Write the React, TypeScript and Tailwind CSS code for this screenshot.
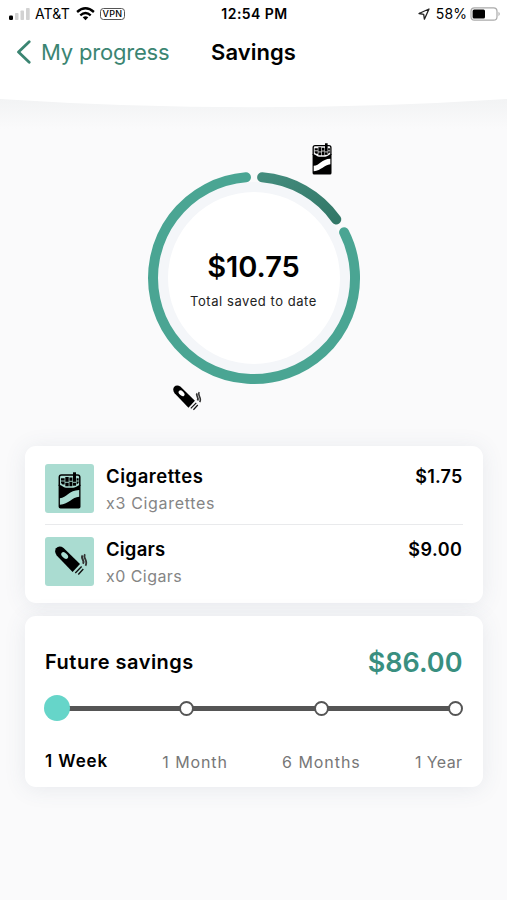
import { useState } from "react";
import clsx from "clsx";

type IconProps = { className?: string };

const products = [
  { name: "Cigarettes", detail: "x3 Cigarettes", amount: "$1.75", Icon: PackIcon, iconClass: "w-[23px] h-[37px] mt-1", nameClass: "tracking-[0.55px]", detailClass: "tracking-[0.68px]", amountClass: "tracking-[0.2px]" },
  { name: "Cigars", detail: "x0 Cigars", amount: "$9.00", Icon: CigarIcon, iconClass: "w-[33px] h-[31px] ml-1", nameClass: "tracking-[0.2px]", detailClass: "tracking-[0.45px]", amountClass: "tracking-[0.5px]" },
];

const periods = [
  { label: "1 Week", active: "tracking-[0.9px]", idle: "tracking-[0.3px]" },
  { label: "1 Month", active: "tracking-[0.3px]", idle: "tracking-[0.9px]" },
  { label: "6 Months", active: "tracking-[0.3px]", idle: "tracking-[0.95px]" },
  { label: "1 Year", active: "tracking-[0.3px]", idle: "tracking-[0.4px]" },
];

export default function App() {
  return (
    <div className="h-[900px] w-[507px] overflow-hidden bg-[#fafafb] font-['Inter',sans-serif] text-black">
      <Header />
      <SavingsRing />
      <main className="flex flex-col gap-[13px] pl-[25px] pr-[24.5px]">
        <ProductCard />
        <FutureSavings />
      </main>
    </div>
  );
}

function Header() {
  return (
    <header className="h-[120px]">
      <div className="h-[99px] bg-white">
        <div className="grid h-[27px] grid-cols-[1fr_auto_1fr] items-center pl-2 pr-[6px]">
          <div className="flex items-center">
            <SignalIcon className="h-[14px] w-[23px]" />
            <span className="ml-1 text-[14px] tracking-[0.15px]">AT&amp;T</span>
            <WifiIcon className="ml-[6px] h-[14px] w-[19px]" />
            <span className="ml-[5px] flex h-[12px] w-[25px] items-center justify-center rounded-[3.5px] border border-[#555] text-[9px] font-medium tracking-[0.3px]">VPN</span>
          </div>
          <span className="text-[14px] font-semibold tracking-[0.45px]">12:54 PM</span>
          <div className="flex items-center justify-end">
            <LocationIcon className="h-3 w-3" />
            <span className="ml-[6px] text-[14px] tracking-[0.1px]">58%</span>
            <BatteryIcon className="ml-[3px] h-[14px] w-[31px]" />
          </div>
        </div>
        <nav className="grid h-[50px] grid-cols-[1fr_auto_1fr] items-center px-4">
          <a className="flex items-center text-[#3b8572]">
            <svg viewBox="0 0 16 24" className="h-6 w-4" fill="none" stroke="currentColor" strokeWidth="2.8" strokeLinecap="round" strokeLinejoin="round">
              <path d="M13.2 1.8 2.5 12l10.7 10.2" />
            </svg>
            <span className="ml-[9px] whitespace-nowrap text-[22px] tracking-[-0.2px]">My progress</span>
          </a>
          <h1 className="text-[22px] font-semibold tracking-[0.05px]">Savings</h1>
        </nav>
      </div>
      <svg viewBox="0 0 507 30" className="block h-[30px] w-full">
        <defs>
          <linearGradient id="headerShade" x1="0" y1="0" x2="0" y2="1">
            <stop offset="0" stopColor="#f2f3f4" />
            <stop offset="1" stopColor="#fafafb" />
          </linearGradient>
        </defs>
        <rect width="507" height="30" fill="url(#headerShade)" />
        <path d="M0 0Q253 16.5 507 0Z" fill="#fff" />
      </svg>
    </header>
  );
}

function SavingsRing() {
  return (
    <section className="relative h-[326px] text-white">
      <svg viewBox="0 0 507 326" className="absolute inset-0 h-full w-full">
        <defs>
          <linearGradient id="packArc" x1="0" y1="0" x2="1" y2="1">
            <stop offset="0" stopColor="#438c7d" />
            <stop offset="1" stopColor="#327767" />
          </linearGradient>
        </defs>
        <g transform="translate(254 158)">
          <circle r="96" fill="#f4f6f9" />
          <circle r="86" fill="#fff" />
          <g fill="none" strokeWidth="10" strokeLinecap="round">
            <path d="M8.1-100.7A101 101 0 0 1 82.3-58.5" stroke="url(#packArc)" />
            <path d="M90.1-45.7A101 101 0 1 1-8-100.7" stroke="#4aa593" />
          </g>
        </g>
      </svg>
      <PackIcon className="absolute left-[312px] top-[23px] h-8 w-5" />
      <CigarIcon className="absolute left-[173px] top-[265px] h-[27px] w-[29px]" />
      <div className="relative flex flex-col items-center pt-[128px] text-black">
        <p className="text-[29px] font-semibold leading-[38px]">$10.75</p>
        <p className="mt-[6px] text-[13px] leading-[18px] tracking-[0.55px] text-[#222]">Total saved to date</p>
      </div>
    </section>
  );
}

function ProductCard() {
  return (
    <section className="h-[157px] rounded-[11px] bg-white px-5 pt-[18px] shadow-[0_2px_22px_rgba(70,85,115,0.10)]">
      {products.map(({ name, detail, amount, Icon, iconClass, nameClass, detailClass, amountClass }, i) => (
        <div key={name} className={clsx("flex", i > 0 && "mt-[11px] border-t border-[#e9eaec] pt-3")}>
          <div className="flex h-[49px] w-[49px] items-center justify-center rounded-[3px] bg-[#aadcd1] text-[#aadcd1]">
            <Icon className={iconClass} />
          </div>
          <div className="ml-3 h-[49px] flex-1">
            <p className={clsx("text-[18.5px] font-semibold leading-6", nameClass)}>{name}</p>
            <p className={clsx("mt-[3px] text-[16px] leading-6 text-[#858585]", detailClass)}>{detail}</p>
          </div>
          <p className={clsx("pt-px text-[18px] font-semibold leading-6", amountClass)}>{amount}</p>
        </div>
      ))}
    </section>
  );
}

function FutureSavings() {
  const [selected, setSelected] = useState(0);

  return (
    <section className="h-[171px] rounded-[11px] bg-white px-5 pt-[26px] shadow-[0_2px_22px_rgba(70,85,115,0.10)]">
      <div className="flex h-10 items-center justify-between">
        <h2 className="text-[20px] font-semibold tracking-[0.5px]">Future savings</h2>
        <p className="pt-[2px] text-[27px] font-semibold text-[#398f80]">$86.00</p>
      </div>
      <div className="relative -mx-px mt-[13px] flex h-[26px] items-center justify-between">
        <div className="absolute left-3 right-2 top-[11px] h-[5px] bg-[#555]" />
        {periods.map(({ label }, i) => (
          <button
            key={label}
            aria-label={label}
            onClick={() => setSelected(i)}
            className={clsx(
              "relative rounded-full",
              selected === i ? "-mr-[11px] h-[26px] w-[26px] bg-[#66d5c9]" : "h-[15px] w-[15px] border-2 border-[#555] bg-white"
            )}
          />
        ))}
      </div>
      <div className="mt-[29px] flex h-6 items-center justify-between">
        {periods.map(({ label, active, idle }, i) => (
          <span key={label} className={clsx(selected === i ? ["text-[17px] font-semibold", active] : ["text-[16px] text-[#777]", idle])}>
            {label}
          </span>
        ))}
      </div>
    </section>
  );
}

// The light details of both icons take the text colour of their container
function PackIcon({ className }: IconProps) {
  return (
    <svg viewBox="0 0 23 37" className={className}>
      <path d="M1.300 14V5.200Q1.300 3 3.500 3H19.500Q21.800 3 21.800 5.200V14" fill="none" stroke="#000" strokeWidth="1.500" />
      <path d="M3 6.200h3.600v6.300H4.500L3 11zM7.300 5h3.400v9.300H7.300zM11.400 5.500h3v8.800h-3zM18.600 6.200h2v4.800l-2 1.500z" />
      <path d="M15 .3h3v13.400h-3z" />
      <path d="M2.600 9H6.800M7 10.300H11M11.200 9.300h3.400M15 10.300h3M18.400 9h2.500" stroke="currentColor" strokeWidth=".9" />
      <path d="M.6 12.800C4 13 5.200 15.700 8 15.800h7.300c2.800 0 4-2.500 7.200-3v21.900q0 1.800-1.700 1.800H2.500Q.6 36.500.6 34.700Z" />
      <path fill="currentColor" d="M1.900 26.300C8.700 26 11 18.300 21.200 18.100v6.600C14 25.200 11 32 1.900 32.700Z" />
    </svg>
  );
}

function CigarIcon({ className }: IconProps) {
  return (
    <svg viewBox="0 0 33 31" className={className}>
      <path d="M1 2.200Q4.200-1 8.600 1.900L25 18 17.600 26 1.700 9.600Q-1 5.500 1 2.200Z" />
      <ellipse cx="9.700" cy="9.500" rx="4" ry="2.500" transform="rotate(43 9.700 9.500)" fill="currentColor" />
      <path d="m26.600 20.500-6.300 6.400M28.300 23l-5 5.400" stroke="#111" strokeWidth="1.400" />
      <path d="M27.700 9.500c-2.700 2.700 2.600 4.400.3 8.300" fill="none" stroke="#333" strokeWidth="2" />
      <path d="M30 8.200c-2.600 4 3.600 6.200.5 11.500" fill="none" stroke="#333" strokeWidth="1.800" />
    </svg>
  );
}

function SignalIcon({ className }: IconProps) {
  return (
    <svg viewBox="0 0 23 14" className={className}>
      <rect x="1" y="8.500" width="4" height="4.500" rx="1.200" />
      <g fill="#d2d2d2">
        <rect x="7" y="6" width="3.500" height="7" rx=".8" />
        <rect x="12.500" y="3.500" width="3.500" height="9.500" rx=".8" />
        <rect x="18" y="1" width="3.700" height="12" rx=".8" />
      </g>
    </svg>
  );
}

function WifiIcon({ className }: IconProps) {
  return (
    <svg viewBox="0 0 19 14" className={className} fill="none" stroke="#000" strokeWidth="2.400">
      <path d="M1.100 5Q9.500-2.300 17.900 5M4.300 8.300Q9.500 3.900 14.700 8.300" />
      <path d="M6.700 10.300Q9.500 8 12.300 10.300L9.500 13.300Z" fill="#000" stroke="none" />
    </svg>
  );
}

function LocationIcon({ className }: IconProps) {
  return (
    <svg viewBox="0 0 12 12" className={className} fill="none" stroke="#222" strokeWidth="1.300" strokeLinejoin="round">
      <path d="M11 1 1 5.500l4.700.8.700 4.900Z" />
    </svg>
  );
}

function BatteryIcon({ className }: IconProps) {
  return (
    <svg viewBox="0 0 31 14" className={className}>
      <rect x="1" y=".8" width="26" height="12.400" rx="3.500" fill="#fff" stroke="#aaa" strokeWidth="1.200" />
      <rect x="2.600" y="2.500" width="12.400" height="9" rx="1.500" />
      <path d="M28.500 4.800q2.500 2.200 0 4.400Z" fill="#aaa" />
    </svg>
  );
}
